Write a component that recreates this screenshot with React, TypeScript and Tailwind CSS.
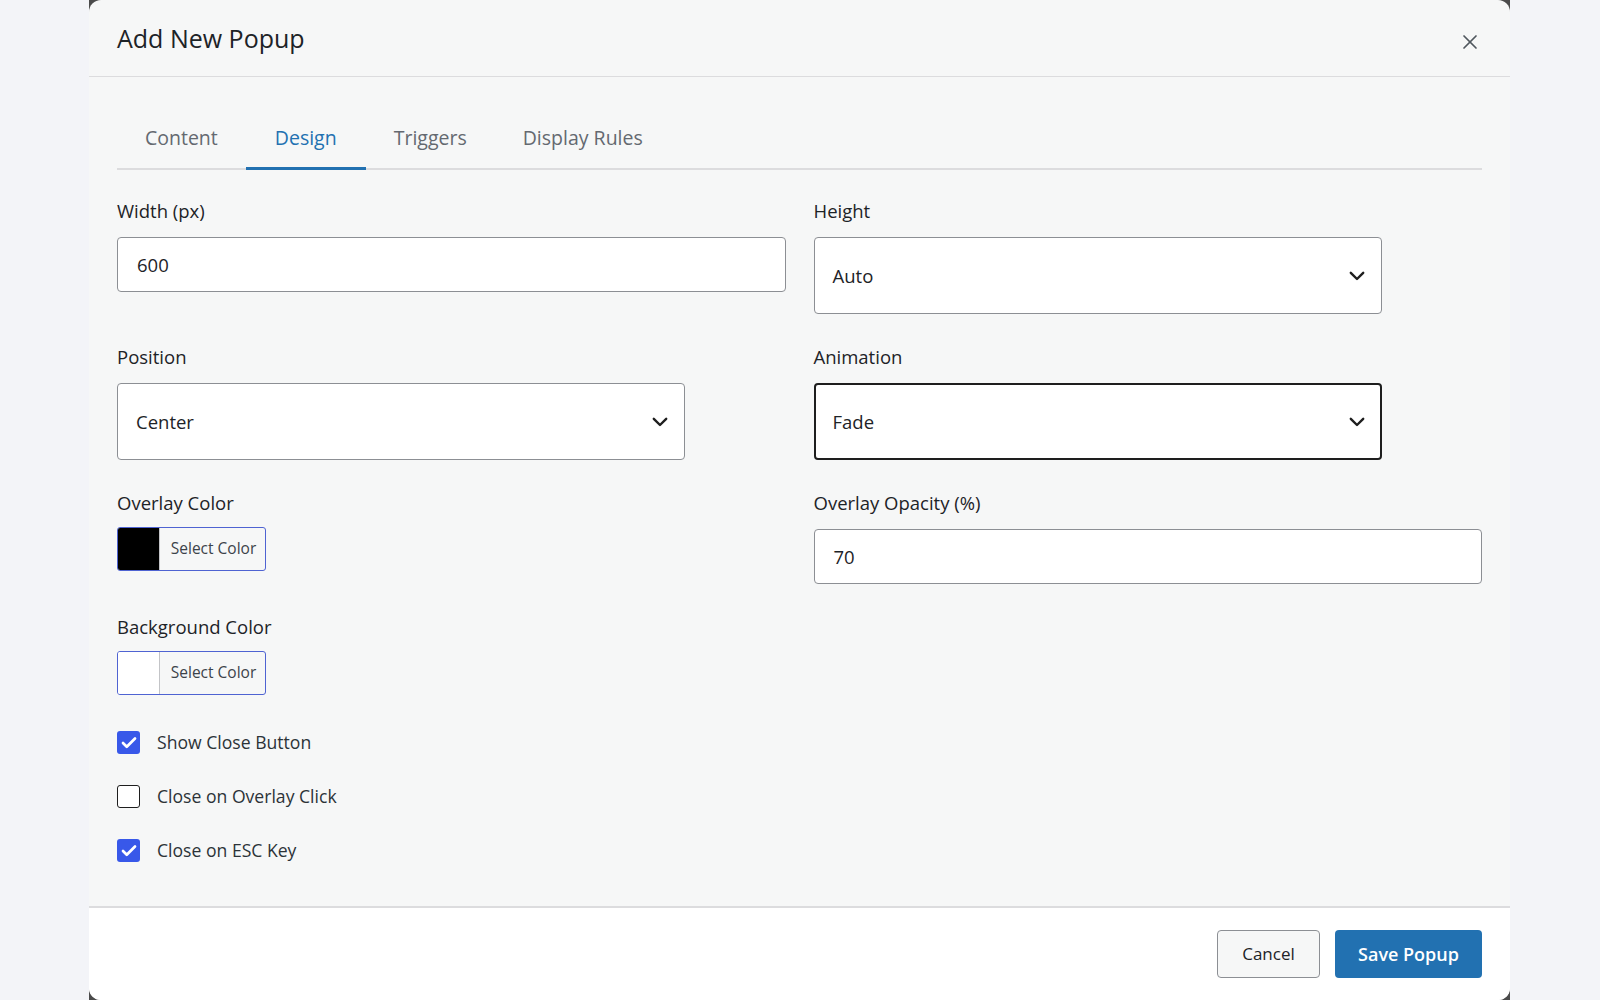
import React from "react";
import { X, Check } from "lucide-react";

function Chevron() {
  return (
    <svg width="16" height="10" viewBox="0 0 16 10" fill="none">
      <path d="M1.8 1.8 L8 8 L14.2 1.8" stroke="#1e1e1e" strokeWidth="2.4" strokeLinecap="round" strokeLinejoin="round" />
    </svg>
  );
}

function Label({ children }: { children: React.ReactNode }) {
  return <div className="text-[18.5px] leading-[24px] font-medium text-[#1d2327] mb-[14px]">{children}</div>;
}

function TextInput({ value }: { value: string }) {
  return (
    <div className="h-[55px] w-full rounded-[4px] border border-[#8c8f94] bg-white flex items-center pl-[19px] text-[18.5px] text-[#1d2327]">
      {value}
    </div>
  );
}

function Select({ value, focused }: { value: string; focused?: boolean }) {
  return (
    <div
      className={
        focused
          ? "h-[77px] w-[568px] rounded-[4px] border-2 border-[#1e1e1e] bg-white flex items-center justify-between pl-[17px] pr-[15px] text-[18.5px] text-[#1d2327]"
          : "h-[77px] w-[568px] rounded-[4px] border border-[#8c8f94] bg-white flex items-center justify-between pl-[18px] pr-[16px] text-[18.5px] text-[#1d2327]"
      }
    >
      <span>{value}</span>
      <Chevron />
    </div>
  );
}

function ColorButton({ color }: { color: string }) {
  return (
    <div className="-mt-[2px] h-[44px] w-[149px] rounded-[3px] border-[1.5px] border-[#4f63d2] flex overflow-hidden bg-[#f6f7f7]">
      <div className="w-[42px] h-full border-r border-[#c3c4c7]" style={{ background: color }} />
      <div className="flex-1 flex items-center justify-center text-[15.5px] text-[#3c434a] pl-[2px]">Select Color</div>
    </div>
  );
}

function CheckRow({ checked, label }: { checked: boolean; label: string }) {
  return (
    <div className="flex items-center h-[23px]">
      {checked ? (
        <div className="w-[23px] h-[23px] rounded-[3px] bg-[#3858e9] flex items-center justify-center">
          <Check size={18} color="#ffffff" strokeWidth={3.6} />
        </div>
      ) : (
        <div className="w-[23px] h-[23px] rounded-[3px] border-[1.5px] border-[#1e1e1e] bg-white" />
      )}
      <span className="ml-[17px] text-[17.6px] text-[#2c3338]">{label}</span>
    </div>
  );
}

export default function App() {
  const tabs = ["Content", "Design", "Triggers", "Display Rules"];
  return (
    <div className="min-h-screen w-full bg-[#f3f4f8] font-['Open_Sans',sans-serif]">
      <div className="ml-[89px] w-[1421px] h-[1000px] bg-[#4b4b4b]">
        <div className="h-full rounded-[12px] bg-[#f6f7f7] overflow-hidden flex flex-col">
          {/* Header */}
          <div className="h-[77px] shrink-0 border-b border-[#dcdcde] px-[28px] flex items-center justify-between">
            <h1 className="text-[25px] font-medium text-[#1d2327] leading-[32px]">Add New Popup</h1>
            <button className="w-[24px] h-[24px] flex items-center justify-center mt-[7px]">
              <X size={28} color="#50575e" strokeWidth={1.7} />
            </button>
          </div>

          {/* Body */}
          <div className="flex-1 px-[28px]">
            <div className="mt-[31px] flex border-b-2 border-[#dcdcde]">
              {tabs.map((t) =>
                t === "Design" ? (
                  <div
                    key={t}
                    className="px-[29px] pt-[17px] pb-[16px] text-[19.5px] leading-[26px] font-medium text-[#2271b1] border-b-[3px] border-[#2271b1] -mb-[2px]"
                  >
                    {t}
                  </div>
                ) : (
                  <div key={t} className="px-[28px] pt-[17px] pb-[17px] text-[19.5px] leading-[26px] font-medium text-[#646970]">
                    {t}
                  </div>
                )
              )}
            </div>

            <div className="mt-[29px] grid grid-cols-2 gap-x-[28px] gap-y-[31px] items-start">
              <div>
                <Label>Width (px)</Label>
                <TextInput value="600" />
              </div>
              <div>
                <Label>Height</Label>
                <Select value="Auto" />
              </div>
              <div>
                <Label>Position</Label>
                <Select value="Center" />
              </div>
              <div>
                <Label>Animation</Label>
                <Select value="Fade" focused />
              </div>
              <div>
                <Label>Overlay Color</Label>
                <ColorButton color="#000000" />
              </div>
              <div>
                <Label>Overlay Opacity (%)</Label>
                <TextInput value="70" />
              </div>
              <div>
                <Label>Background Color</Label>
                <ColorButton color="#ffffff" />
              </div>
              <div />
            </div>

            <div className="mt-[36px] flex flex-col gap-[31px]">
              <CheckRow checked label="Show Close Button" />
              <CheckRow checked={false} label="Close on Overlay Click" />
              <CheckRow checked label="Close on ESC Key" />
            </div>
          </div>

          {/* Footer */}
          <div className="h-[94px] shrink-0 border-t-2 border-[#dcdcde] bg-white px-[28px] pt-[22px] flex justify-end gap-[15px]">
            <button className="w-[103px] h-[48px] rounded-[4px] border border-[#8c8f94] bg-[#f6f7f7] text-[17px] font-medium text-[#1d2327]">
              Cancel
            </button>
            <button className="w-[147px] h-[48px] rounded-[4px] bg-[#2271b1] text-[18px] font-semibold text-white">
              Save Popup
            </button>
          </div>
        </div>
      </div>
    </div>
  );
}
